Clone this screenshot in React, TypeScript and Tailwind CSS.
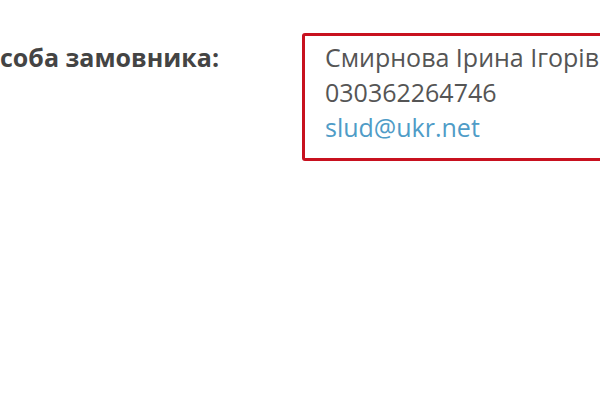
import React from 'react';

const App: React.FC = () => {
  return (
    <div
      className="w-[600px] h-[400px] bg-white overflow-hidden"
      style={{ fontFamily: '"Open Sans", "Noto Sans", sans-serif' }}
    >
      <div className="flex items-start pt-[33px]">
        {/* Label */}
        <div className="w-[302px] shrink-0 pt-[7px] text-[25px] leading-[35px] font-bold text-[#444] whitespace-nowrap">
          соба замовника:
        </div>

        {/* Contact box */}
        <div className="w-[330px] shrink-0 h-[128px] border-[3px] border-[#c8111f] rounded-[3px] pl-[20px] pt-[4px] text-[25px] leading-[35px] text-[#555] whitespace-nowrap">
          <div>Смирнова Ірина Ігорівна</div>
          <div>030362264746</div>
          <a href="#" className="text-[#4f9cc7]">
            slud@ukr.net
          </a>
        </div>
      </div>
    </div>
  );
};

export default App;
